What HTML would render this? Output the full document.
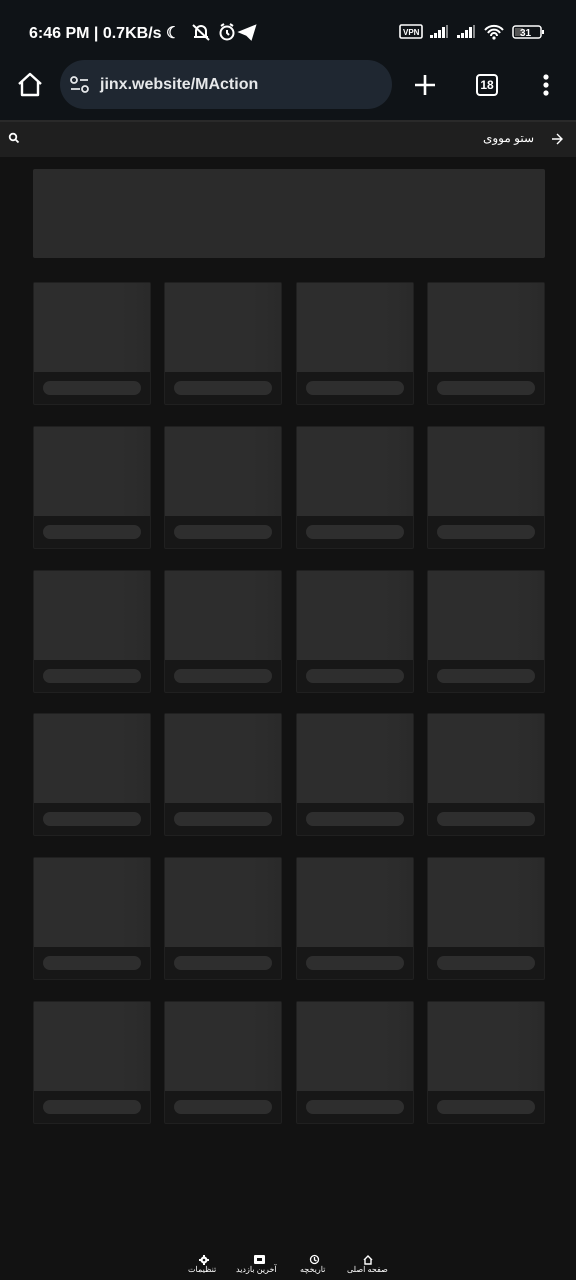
<!DOCTYPE html>
<html><head><meta charset="utf-8">
<style>
*{margin:0;padding:0;box-sizing:border-box}
body{width:576px;height:1280px;background:#121212;font-family:"Liberation Sans","Noto Sans CJK SC",sans-serif;position:relative;overflow:hidden;color:#fff}
.top{position:absolute;left:0;top:0;width:576px;height:120px;background:#0f1317}
.sb{position:absolute;top:23px;left:29px;font-size:16px;font-weight:bold;color:#fff}
.url{position:absolute;left:60px;top:60px;width:332px;height:49px;border-radius:25px;background:#1f2731}
.url span{position:absolute;left:40px;top:16px;font-size:16px;font-weight:bold;color:#e6e8ea}
.search{position:absolute;left:0;top:120px;width:576px;height:37px;background:#1f1f1f;border-top:2px solid #2a2a2a}
.banner{position:absolute;left:33px;top:169px;width:512px;height:89px;background:#2b2b2b;border-radius:2px}
.card{position:absolute;width:118px;height:123px;background:#171717;border:1px solid #202020;border-radius:2px}
.card .img{height:89px;background:linear-gradient(90deg,#2d2d2d 0%,#2d2d2d 75%,#2a2a2a 100%)}
.card .bar{position:absolute;left:9px;top:98px;width:98px;height:14px;border-radius:7px;background:#2e2e2e}
.nav{position:absolute;top:1254px;font-size:8px;color:#fff;text-align:center}
</style></head><body>
<div class="top"></div>
<div class="sb">6:46 PM | 0.7KB/s ☾</div>
<svg style="position:absolute;left:190px;top:22px" width="70" height="20" viewBox="0 0 70 20" fill="none" stroke="#fff" stroke-width="2">
<path d="M4 15h14M6 15V9a5 5 0 0 1 10 0v6M3 3l16 15"/>
<circle cx="37" cy="11" r="6.5"/><path d="M37 8v3l2 2M31 4l3-2M43 4l-3-2"/>
<path d="M50 10l15-6-4 13-4-4z" fill="#fff"/></svg>
<svg style="position:absolute;left:399px;top:24px" width="148" height="18" viewBox="0 0 148 18" fill="#fff">
<rect x="1" y="1" width="22" height="13" rx="1.5" fill="none" stroke="#fff" stroke-width="1.6"/>
<text x="4" y="11" font-size="8" font-weight="bold" font-family="Liberation Sans">VPN</text>
<rect x="31" y="11" width="3" height="3"/><rect x="35" y="9" width="3" height="5"/><rect x="39" y="6" width="3" height="8"/><rect x="43" y="3" width="3" height="11"/><rect x="47" y="1" width="2" height="13" opacity=".5"/>
<rect x="58" y="11" width="3" height="3"/><rect x="62" y="9" width="3" height="5"/><rect x="66" y="6" width="3" height="8"/><rect x="70" y="3" width="3" height="11"/><rect x="74" y="1" width="2" height="13" opacity=".5"/>
<path d="M86 6a12 12 0 0 1 18 0M89 9a7 7 0 0 1 12 0M92 12a3 3 0 0 1 6 0" stroke="#fff" stroke-width="2" fill="none"/><circle cx="95" cy="14" r="1.6"/>
<rect x="114" y="2" width="28" height="12" rx="2.5" fill="none" stroke="#fff" stroke-width="1.5"/><rect x="116" y="4" width="8" height="8" fill="#555"/>
<text x="121" y="12" font-size="10" font-weight="bold" font-family="Liberation Sans">31</text><rect x="143" y="6" width="2" height="4"/></svg>
<svg style="position:absolute;left:16px;top:72px" width="28" height="26" viewBox="0 0 28 26" fill="none" stroke="#fff" stroke-width="2.4" stroke-linejoin="round"><path d="M3 12L14 2l11 10M6 10v13h16V10"/></svg>
<div class="url"><svg style="position:absolute;left:9px;top:15px" width="22" height="20" viewBox="0 0 22 20" fill="none" stroke="#e6e8ea" stroke-width="1.8"><circle cx="5" cy="5" r="3"/><path d="M11 5h8M2 14h9"/><circle cx="16" cy="14" r="3"/></svg><span>jinx.website/MAction</span></div>
<svg style="position:absolute;left:413px;top:73px" width="24" height="24" viewBox="0 0 24 24" stroke="#fff" stroke-width="2.6"><path d="M12 2v20M2 12h20"/></svg>
<div style="position:absolute;left:476px;top:74px;width:22px;height:22px;border:2.2px solid #fff;border-radius:4px;font-size:12px;font-weight:bold;text-align:center;line-height:18px">18</div>
<svg style="position:absolute;left:540px;top:73px" width="12" height="24" viewBox="0 0 12 24" fill="#fff"><circle cx="6" cy="4" r="2.6"/><circle cx="6" cy="12" r="2.6"/><circle cx="6" cy="20" r="2.6"/></svg>
<div class="search">
<svg style="position:absolute;left:8px;top:10px" width="12" height="12" viewBox="0 0 12 12" fill="none" stroke="#fff" stroke-width="1.8"><circle cx="5" cy="5" r="3.3"/><path d="M7.5 7.5l3 3"/></svg>
<span style="position:absolute;right:42px;top:9px;font-size:12px;color:#fff;font-family:'Liberation Sans','Noto Sans CJK SC',sans-serif" dir="rtl">ستو مووی</span>
<svg style="position:absolute;left:551px;top:11px" width="12" height="12" viewBox="0 0 12 12" fill="none" stroke="#fff" stroke-width="1.4"><path d="M1 6h10M6 1l5 5-5 5"/></svg>
</div>
<div class="banner"></div>
<div id="g"></div>
<script>
var xs=[33,164,296,427],ys=[282,426,570,713,857,1001],h='';
ys.forEach(function(y){xs.forEach(function(x){h+='<div class="card" style="left:'+x+'px;top:'+y+'px"><div class="img"></div><div class="bar"></div></div>';});});
document.getElementById('g').innerHTML=h;
</script>
<svg style="position:absolute;left:199px;top:1255px" width="10" height="10" viewBox="0 0 10 10" fill="#fff"><circle cx="5" cy="5" r="3.5"/><circle cx="5" cy="5" r="1.3" fill="#121212"/><path d="M4 0h2v2H4zM4 8h2v2H4zM0 4h2v2H0zM8 4h2v2H8z"/></svg>
<div class="nav" style="left:188px;top:1265px" dir="rtl">تنظیمات</div>
<svg style="position:absolute;left:254px;top:1255px" width="11" height="9" viewBox="0 0 11 9" fill="#fff"><rect x="0" y="0" width="11" height="9" rx="1"/><rect x="3" y="3" width="5" height="3" fill="#121212"/></svg>
<div class="nav" style="left:236px;top:1265px" dir="rtl">آخرین بازدید</div>
<svg style="position:absolute;left:309px;top:1254px" width="11" height="11" viewBox="0 0 11 11" fill="none" stroke="#fff" stroke-width="1.3"><circle cx="5.5" cy="5.5" r="4"/><path d="M5.5 3v3l2 1"/></svg>
<div class="nav" style="left:300px;top:1265px" dir="rtl">تاریخچه</div>
<svg style="position:absolute;left:363px;top:1255px" width="10" height="10" viewBox="0 0 10 10" fill="none" stroke="#fff" stroke-width="1.4"><path d="M1 5L5 1l4 4M2 4v5h6V4"/></svg>
<div class="nav" style="left:347px;top:1265px" dir="rtl">صفحه اصلی</div>
</body></html>
